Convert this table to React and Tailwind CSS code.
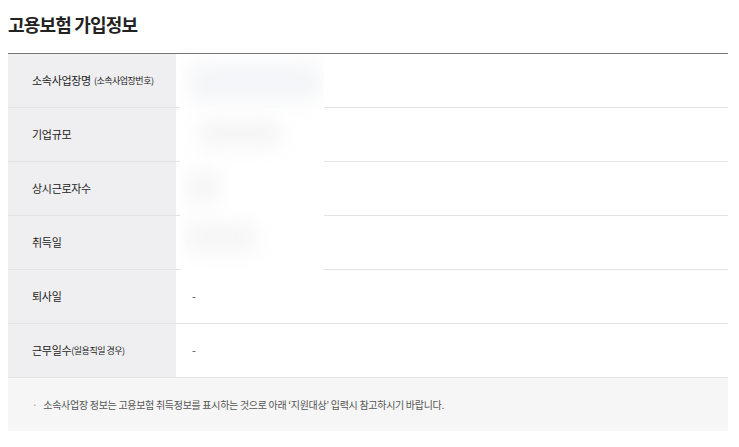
import React from "react";

const rows = [
  { label: "소속사업장명", sub: "(소속사업장번호)", value: "" },
  { label: "기업규모", value: "" },
  { label: "상시근로자수", value: "" },
  { label: "취득일", value: "" },
  { label: "퇴사일", value: "-" },
  { label: "근무일수", sub: "(일용직일 경우)", value: "-", tight: true },
];

// blurred mask over personal data
const BlurMask = () => (
  <div className="absolute left-[172px] top-0 w-[144px] h-[216px] bg-white overflow-hidden">
    <div className="absolute left-[10px] top-[10px] w-[130px] h-[36px] bg-[#eceef2] blur-[10px] opacity-60" />
    <div className="absolute left-[20px] top-[68px] w-[80px] h-[24px] bg-[#ececee] blur-[10px] opacity-60" />
    <div className="absolute left-[6px] top-[116px] w-[34px] h-[34px] bg-[#f0f0f2] blur-[10px] opacity-60" />
    <div className="absolute left-[6px] top-[170px] w-[70px] h-[28px] bg-[#eeeef0] blur-[10px] opacity-60" />
  </div>
);

export default function App() {
  return (
    <div
      className="w-[739px] h-[447px] bg-white px-2 text-[#222]"
      style={{ fontFamily: '"Noto Sans CJK KR", "Noto Sans", sans-serif' }}
    >
      <div className="h-[53px] flex items-center">
        <h2 className="text-[18px] font-semibold tracking-[-0.8px] pb-[4px]">고용보험 가입정보</h2>
      </div>
      <div className="relative w-[720px] border-t border-[#777]">
        {rows.map((r) => (
          <div key={r.label} className="flex h-[54px] border-b border-[#e3e3e3]">
            <div className="w-[168px] bg-[#efeff1] flex items-center pl-6 text-[11px] tracking-[-0.3px] text-[#222]">
              {r.label}
              {r.sub && (
                <span className={`text-[9px] tracking-[-0.5px] ${r.tight ? "" : "ml-[3px]"}`}>{r.sub}</span>
              )}
            </div>
            <div className="flex-1 flex items-center pl-4 text-[11px] text-[#444]">{r.value}</div>
          </div>
        ))}
        <div className="h-[53px] bg-[#f6f6f6] flex items-center pl-6 text-[10px] text-[#555] tracking-[-0.3px]">
          <span className="mr-[6px] text-[#999]">·</span>
          소속사업장 정보는 고용보험 취득정보를 표시하는 것으로 아래 ‘지원대상’ 입력시 참고하시기 바랍니다.
        </div>
        <BlurMask />
      </div>
    </div>
  );
}
